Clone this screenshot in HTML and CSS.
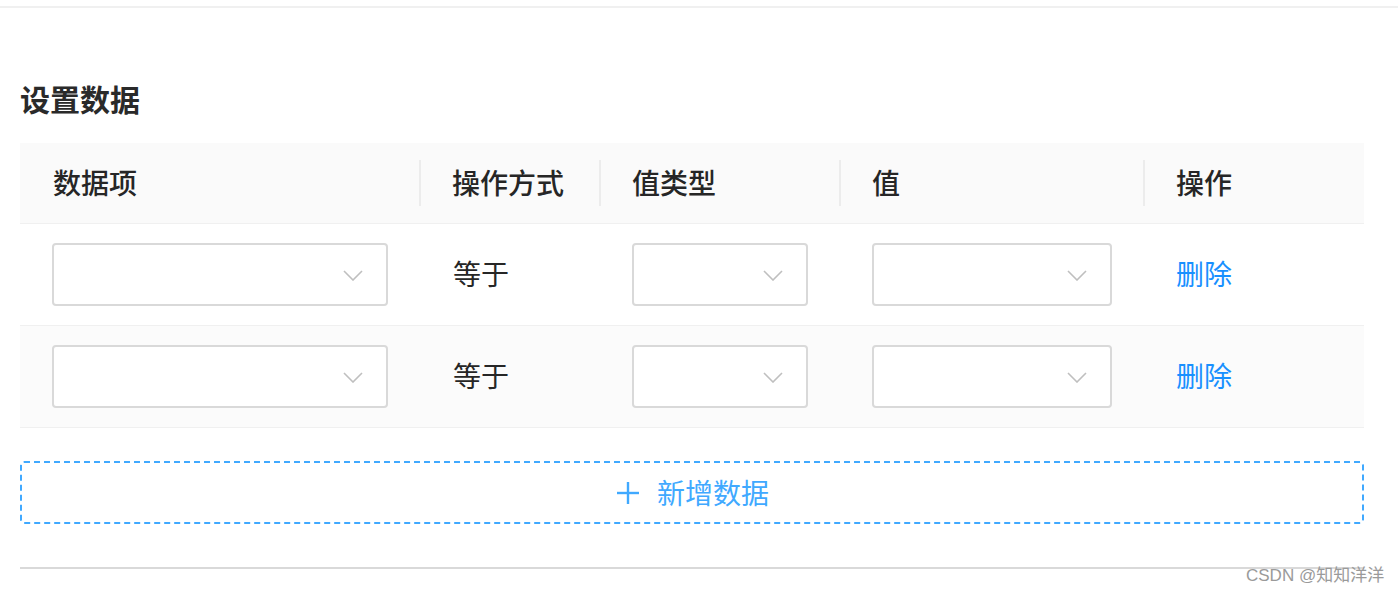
FILE: index.html
```html
<!DOCTYPE html>
<html lang="zh">
<head>
<meta charset="utf-8">
<title>设置数据</title>
<link rel="stylesheet" href="styles.css">
</head>
<body>
<div class="topline"></div>
<main class="page">
  <h2 class="title">设置数据</h2>
  <div class="table">
    <div class="row head">
      <div class="th">数据项</div>
      <div class="th sep">操作方式</div>
      <div class="th sep">值类型</div>
      <div class="th sep">值</div>
      <div class="th sep">操作</div>
    </div>
    <div class="row body">
      <div class="td"><div class="select w1"><svg class="arrow" viewBox="0 0 20 11"><polyline points="1,1 10,10 19,1"/></svg></div></div>
      <div class="td text">等于</div>
      <div class="td"><div class="select w2"><svg class="arrow" viewBox="0 0 20 11"><polyline points="1,1 10,10 19,1"/></svg></div></div>
      <div class="td"><div class="select w3"><svg class="arrow" viewBox="0 0 20 11"><polyline points="1,1 10,10 19,1"/></svg></div></div>
      <div class="td link">删除</div>
    </div>
    <div class="row body alt">
      <div class="td"><div class="select w1"><svg class="arrow" viewBox="0 0 20 11"><polyline points="1,1 10,10 19,1"/></svg></div></div>
      <div class="td text">等于</div>
      <div class="td"><div class="select w2"><svg class="arrow" viewBox="0 0 20 11"><polyline points="1,1 10,10 19,1"/></svg></div></div>
      <div class="td"><div class="select w3"><svg class="arrow" viewBox="0 0 20 11"><polyline points="1,1 10,10 19,1"/></svg></div></div>
      <div class="td link">删除</div>
    </div>
  </div>
  <button class="add" type="button">
    <svg class="plus" viewBox="0 0 22 22"><line x1="11" y1="0" x2="11" y2="22"/><line x1="0" y1="11" x2="22" y2="11"/></svg>
    <span>新增数据</span>
  </button>
  <div class="bottomline"></div>
</main>
<div class="watermark">CSDN @知知洋洋</div>
</body>
</html>
```

FILE: styles.css
```css
html, body {
  margin: 0;
  padding: 0;
  background: #ffffff;
}
body {
  width: 1398px;
  height: 594px;
  position: relative;
  overflow: hidden;
  font-family: "Noto Sans CJK SC", "Noto Sans", sans-serif;
  color: #262626;
}
.topline {
  height: 6px;
  border-bottom: 2px solid #f0f0f0;
}
.page {
  width: 1344px;
  padding-left: 20px;
}
.title {
  margin: 70px 0 25px 0;
  height: 40px;
  line-height: 40px;
  font-size: 30px;
  font-weight: 600;
  color: #2a2a2a;
}
.table {
  width: 1344px;
}
.row {
  display: grid;
  grid-template-columns: 399px 180px 240px 304px 221px;
  align-items: center;
  border-bottom: 1px solid #f0f0f0;
}
.head {
  height: 80px;
  background: #fafafa;
}
.th {
  box-sizing: border-box;
  height: 46px;
  line-height: 44px;
  padding-left: 32px;
  padding-bottom: 2px;
  font-size: 28px;
  font-weight: 500;
  color: #262626;
}
.th.sep {
  border-left: 2px solid #ececec;
  padding-left: 31px;
}
.th:first-child {
  padding-left: 33px;
}
.body {
  height: 101px;
}
.alt {
  background: #fbfbfb;
}
.td {
  padding-left: 33px;
  font-size: 28px;
  display: flex;
  align-items: center;
}
.td:first-child {
  padding-left: 32px;
}
.td.text {
  color: #262626;
  padding-left: 34px;
  padding-bottom: 3px;
}
.td.link {
  color: #1890ff;
  padding-left: 33px;
  padding-bottom: 3px;
}
.select {
  box-sizing: border-box;
  height: 63px;
  border: 2px solid #d9d9d9;
  border-radius: 4px;
  background: #ffffff;
  display: flex;
  align-items: center;
  justify-content: flex-end;
  padding-right: 23px;
}
.w1 { width: 336px; }
.w2 { width: 176px; }
.w3 { width: 240px; }
.arrow {
  width: 20px;
  height: 11px;
  margin-top: 1px;
  fill: none;
  stroke: #bfbfbf;
  stroke-width: 1.6;
}
.add {
  box-sizing: border-box;
  display: flex;
  align-items: center;
  justify-content: center;
  width: 1344px;
  height: 63px;
  margin-top: 33px;
  border: 2px dashed #40a9ff;
  border-radius: 4px;
  background: #ffffff;
  color: #40a9ff;
  font-family: "Noto Sans CJK SC", "Noto Sans", sans-serif;
  font-size: 28px;
  padding: 0 0 2px 2px;
  cursor: pointer;
}
.plus {
  width: 22px;
  height: 22px;
  margin-right: 18px;
  margin-top: 2px;
  stroke: #40a9ff;
  stroke-width: 2.4;
}
.bottomline {
  margin-top: 43px;
  height: 2px;
  background: #d9d9d9;
}
.watermark {
  position: absolute;
  left: 1246px;
  top: 564px;
  font-family: "Liberation Sans", "Noto Sans CJK SC", sans-serif;
  font-size: 17px;
  line-height: 24px;
  color: #9a9a9a;
  white-space: nowrap;
}
```
